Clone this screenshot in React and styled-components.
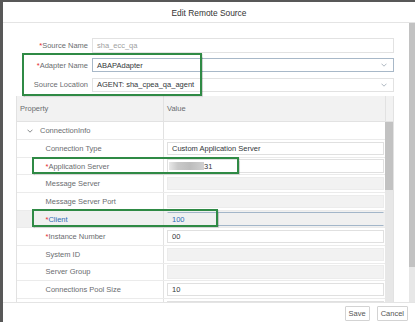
import React from 'react';
import styled, { createGlobalStyle } from 'styled-components';

const Global = createGlobalStyle`
  html, body { margin: 0; padding: 0; background: #585858; }
  body {
    font-family: "Liberation Sans", Arial, sans-serif;
    width: 415px; height: 322px; overflow: hidden;
  }
  * { box-sizing: border-box; }
`;

const Backdrop = styled.div`
  width: 415px; height: 322px;
  padding: 2px 0 0 3px;
  display: flex;
`;

const Dialog = styled.div`
  flex: 1;
  background: #fff;
  display: flex;
  flex-direction: column;
  position: relative;
  min-width: 0;
`;

const Header = styled.div`
  height: 21px;
  border-bottom: 1px solid #e4e4e4;
  display: flex;
  align-items: center;
  justify-content: center;
  font-size: 8.4px;
  color: #333;
  padding-top: 1px;
`;

const Body = styled.div`
  flex: 1;
  display: flex;
  min-height: 0;
`;

const Main = styled.div`
  flex: 1;
  min-width: 0;
  padding: 15px 15px 0 13px;
  display: flex;
  flex-direction: column;
  overflow: hidden;
`;

const ScrollTrack = styled.div`
  width: ${p => p.w}px;
  background: #e7e7e7;
  display: flex;
  flex-direction: column;
  flex-shrink: 0;
`;

const ScrollThumb = styled.div`
  height: ${p => p.h}px;
  background: #c2c2c2;
`;

const Form = styled.div`
  display: grid;
  grid-template-columns: 72px 1fr;
  column-gap: 4px;
  row-gap: 5.3px;
  align-items: center;
`;

const Label = styled.div`
  text-align: right;
  font-size: 7.5px;
  color: #6a6d70;
  white-space: nowrap;
`;

const Star = styled.span`
  color: #e52929;
`;

const Field = styled.div`
  height: 14.5px;
  border: 1px solid ${p => (p.focus ? '#a8b8c8' : '#e2e2e2')};
  background: #fff;
  display: flex;
  align-items: center;
  padding: 0 4px;
  font-size: 7.5px;
  color: ${p => (p.disabled ? '#a0a0a0' : '#32363a')};
  white-space: nowrap;
`;

const FieldText = styled.span`
  flex: 1;
`;

const Chevron = ({ color = '#9aa6b2' }) => (
  <svg width="6" height="4" viewBox="0 0 6 4" style={{ marginRight: 2 }}>
    <path d="M0.5 0.7 L3 3.2 L5.5 0.7" fill="none" stroke={color} strokeWidth="0.8" />
  </svg>
);

const Table = styled.div`
  margin-top: 4.3px;
  flex: 1;
  min-height: 0;
  display: flex;
  flex-direction: column;
  border-left: 1px solid #e2e2e2;
  border-right: 1px solid #e2e2e2;
`;

const HeadRow = styled.div`
  height: 26px;
  background: #f2f2f2;
  border-bottom: 1px solid #e2e2e2;
  display: grid;
  grid-template-columns: 146px 1fr 8px;
  font-size: 7.5px;
  color: #6a6d70;
`;

const HeadCell = styled.div`
  display: flex;
  align-items: center;
  padding-left: 3px;
  border-left: ${p => (p.divider ? '1px solid #e2e2e2' : 'none')};
`;

const TableBody = styled.div`
  flex: 1;
  min-height: 0;
  display: flex;
`;

const Rows = styled.div`
  flex: 1;
  min-width: 0;
  overflow: hidden;
`;

const Row = styled.div`
  height: 17.67px;
  display: grid;
  grid-template-columns: 146px 1fr;
  border-bottom: 1px solid #ebebeb;
  background: ${p => (p.selected ? '#f0f0f0' : '#fff')};
  font-size: 7.5px;
`;

const PropCell = styled.div`
  display: flex;
  align-items: center;
  padding-left: ${p => (p.level === 0 ? 10 : 28.5)}px;
  color: ${p => (p.selected ? '#2f6db5' : '#6a6d70')};
  white-space: nowrap;
  gap: 5px;
`;

const ValueCell = styled.div`
  border-left: 1px solid #e2e2e2;
  display: flex;
  align-items: center;
  padding: 0 1px 0 3px;
`;

const CellInput = styled.div`
  flex: 1;
  height: 13.5px;
  display: flex;
  align-items: center;
  padding: 0 4px;
  white-space: nowrap;
  font-size: 7.5px;
  color: ${p => (p.blue ? '#2f6db5' : '#32363a')};
  background: ${p => (p.disabled ? '#f2f2f2' : p.focus ? 'transparent' : '#fff')};
  border: 1px solid ${p => (p.disabled ? '#ececec' : p.focus ? '#a3b6c9' : '#e0e0e0')};
  border-left-color: ${p => (p.focus ? 'transparent' : p.disabled ? '#ececec' : '#e0e0e0')};
  border-right-color: ${p => (p.focus ? 'transparent' : p.disabled ? '#ececec' : '#e0e0e0')};
`;

const Masked = styled.span`
  display: inline-block;
  width: 35px;
  height: 8px;
  margin-left: -3px;
  background: linear-gradient(90deg, #e8e8e8 0%, #c9c9c9 25%, #bdbdbd 60%, #d0d0d0 100%);
  filter: blur(0.6px);
`;

const Footer = styled.div`
  height: 20px;
  border-top: 1px solid #e4e4e4;
  display: flex;
  justify-content: flex-end;
  align-items: flex-start;
  gap: 7px;
  padding: 3px 7px 0 0;
`;

const Button = styled.button`
  height: 15px;
  padding: 0 ${p => p.pad}px;
  border: 1px solid #d3d3d3;
  border-radius: 1px;
  background: #fff;
  font-family: "Liberation Sans", Arial, sans-serif;
  font-size: 7.5px;
  color: #555;
  line-height: 1;
`;

const Annotation = styled.div`
  position: absolute;
  left: ${p => p.x}px;
  top: ${p => p.y}px;
  width: ${p => p.w}px;
  height: ${p => p.h}px;
  border: 2px solid #2f8a45;
  box-shadow: 0.5px 1px 1px rgba(0, 0, 0, 0.18);
  pointer-events: none;
`;

const rows = [
  { label: 'ConnectionInfo', level: 0 },
  { label: 'Connection Type', value: 'Custom Application Server' },
  { label: 'Application Server', req: true, value: '31', masked: true },
  { label: 'Message Server', disabled: true },
  { label: 'Message Server Port', disabled: true },
  { label: 'Client', req: true, value: '100', selected: true },
  { label: 'Instance Number', req: true, value: '00' },
  { label: 'System ID', disabled: true },
  { label: 'Server Group', disabled: true },
  { label: 'Connections Pool Size', value: '10' },
  { label: '', value: '', key: 'more' },
];

export default function App() {
  return (
    <>
      <Global />
      <Backdrop>
        <Dialog>
          <Header>Edit Remote Source</Header>
          <Body>
            <Main>
              <Form>
                <Label><Star>*</Star>Source Name</Label>
                <Field disabled><FieldText>sha_ecc_qa</FieldText></Field>
                <Label><Star>*</Star>Adapter Name</Label>
                <Field focus><FieldText>ABAPAdapter</FieldText><Chevron /></Field>
                <Label>Source Location</Label>
                <Field><FieldText>AGENT: sha_cpea_qa_agent</FieldText><Chevron /></Field>
              </Form>
              <Table>
                <HeadRow>
                  <HeadCell>Property</HeadCell>
                  <HeadCell divider>Value</HeadCell>
                  <HeadCell divider />
                </HeadRow>
                <TableBody>
                  <Rows>
                    {rows.map(r => (
                      <Row key={r.key || r.label} selected={r.selected}>
                        <PropCell level={r.level} selected={r.selected}>
                          {r.level === 0 && <Chevron color="#6a6d70" />}
                          <span>{r.req && <Star>*</Star>}{r.label}</span>
                        </PropCell>
                        <ValueCell>
                          {r.level !== 0 && (
                            <CellInput disabled={r.disabled} focus={r.selected} blue={r.selected}>
                              {r.masked && <Masked />}
                              {r.value}
                            </CellInput>
                          )}
                        </ValueCell>
                      </Row>
                    ))}
                  </Rows>
                  <ScrollTrack w={8}>
                    <ScrollThumb h={68} />
                  </ScrollTrack>
                </TableBody>
              </Table>
            </Main>
            <ScrollTrack w={6}>
              <ScrollThumb h={244} />
            </ScrollTrack>
          </Body>
          <Footer>
            <Button pad={3}>Save</Button>
            <Button pad={3}>Cancel</Button>
          </Footer>
          <Annotation x={19} y={51} w={180} h={43} />
          <Annotation x={29} y={155} w={207} h={17} />
          <Annotation x={29} y={207} w={186} h={18} />
        </Dialog>
      </Backdrop>
    </>
  );
}
